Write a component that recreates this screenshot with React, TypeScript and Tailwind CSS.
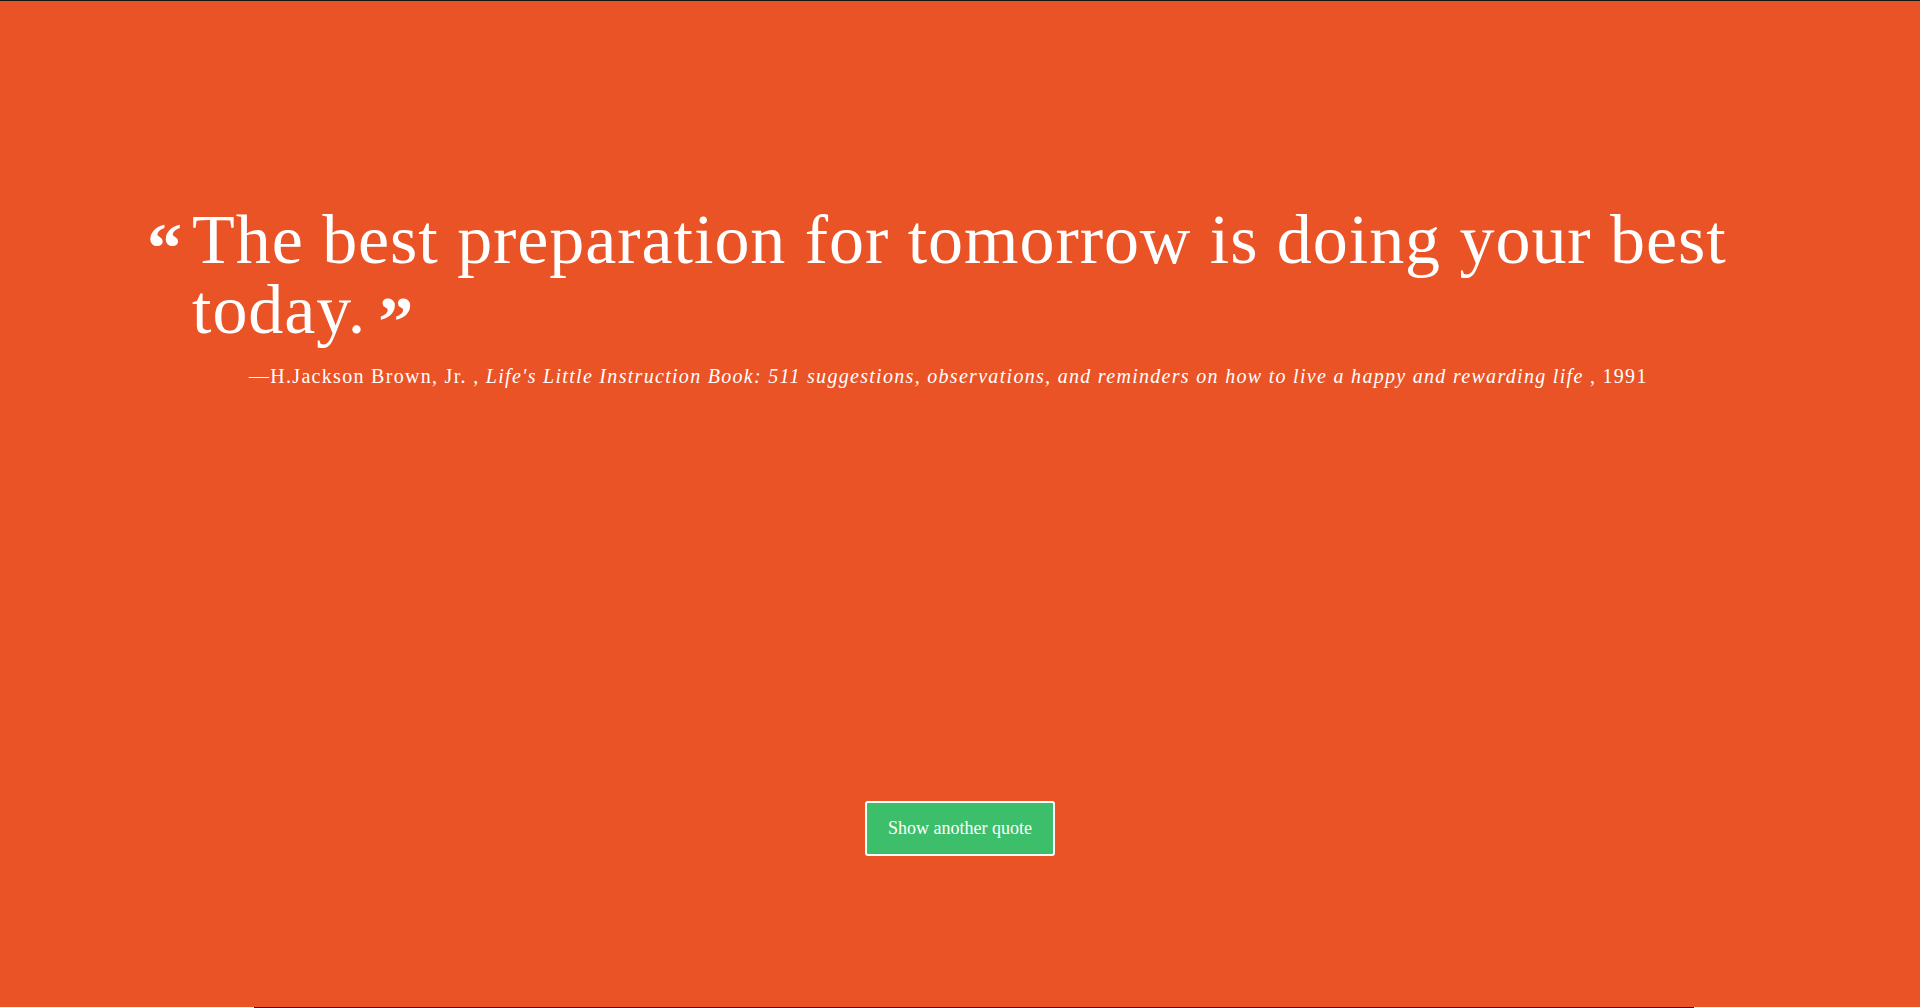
export default function App() {
  return (
    <div className="flex h-[1008px] flex-col bg-[#ea5326] font-['Liberation_Serif',serif] text-white">
      <div className="h-px bg-[#161616]" />
      <main className="flex flex-1 flex-col">
        <blockquote className="flex items-start pl-[147px] pr-[120px] pt-[204px]">
          <span className="mt-[8px] w-[45px] shrink-0 text-[70px] leading-[70px] font-bold">“</span>
          <p className="text-[70px] leading-[70px] tracking-[0.95px]">
            The best preparation for tomorrow is doing your best today.
            <span className="relative top-[12px] ml-[12px] text-[70px] font-bold leading-none">”</span>
          </p>
        </blockquote>
        <p className="mt-[16px] pl-[249px] text-[20px] leading-[30px] tracking-[1.3px]">
          —H.Jackson Brown, Jr. ,{" "}
          <cite>
            Life's Little Instruction Book: 511 suggestions, observations, and reminders on how to live a happy and rewarding life
          </cite>{" "}
          , 1991
        </p>
        <div className="mt-auto flex justify-center pb-[151px]">
          <button className="h-[55px] w-[190px] rounded-[3px] border-2 border-white bg-[#3dbe6a] text-[18px] text-white">
            Show another quote
          </button>
        </div>
      </main>
      <div className="flex h-px">
        <div className="w-[254px] bg-white" />
        <div className="flex-1 bg-[#1c1416]" />
        <div className="w-[226px] bg-white" />
      </div>
    </div>
  );
}
